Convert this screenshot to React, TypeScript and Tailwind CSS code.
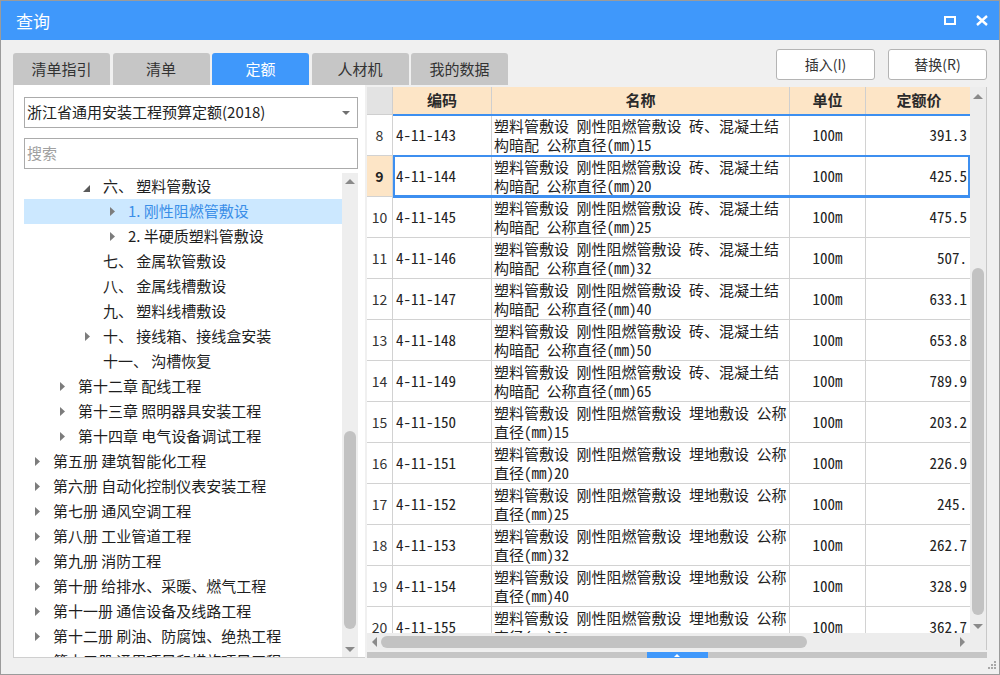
import React from 'react';

type TreeItem = { level: number; text: string; arrow?: boolean; expanded?: boolean; selected?: boolean };

const tree: TreeItem[] = [
  { level: 3, text: '六、 塑料管敷设', expanded: true },
  { level: 4, text: '1. 刚性阻燃管敷设', arrow: true, selected: true },
  { level: 4, text: '2. 半硬质塑料管敷设', arrow: true },
  { level: 3, text: '七、 金属软管敷设' },
  { level: 3, text: '八、 金属线槽敷设' },
  { level: 3, text: '九、 塑料线槽敷设' },
  { level: 3, text: '十、 接线箱、接线盒安装', arrow: true },
  { level: 3, text: '十一、 沟槽恢复' },
  { level: 2, text: '第十二章 配线工程', arrow: true },
  { level: 2, text: '第十三章 照明器具安装工程', arrow: true },
  { level: 2, text: '第十四章 电气设备调试工程', arrow: true },
  { level: 1, text: '第五册 建筑智能化工程', arrow: true },
  { level: 1, text: '第六册 自动化控制仪表安装工程', arrow: true },
  { level: 1, text: '第七册 通风空调工程', arrow: true },
  { level: 1, text: '第八册 工业管道工程', arrow: true },
  { level: 1, text: '第九册 消防工程', arrow: true },
  { level: 1, text: '第十册 给排水、采暖、燃气工程', arrow: true },
  { level: 1, text: '第十一册 通信设备及线路工程', arrow: true },
  { level: 1, text: '第十二册 刷油、防腐蚀、绝热工程', arrow: true },
  { level: 1, text: '第十三册 通用项目和措施项目工程', arrow: true },
];

const concealed = '塑料管敷设 刚性阻燃管敷设 砖、混凝土结';
const buried = '塑料管敷设 刚性阻燃管敷设 埋地敷设 公称';

const rows = [
  { no: 8, code: '4-11-143', l1: concealed, l2: '构暗配 公称直径(mm)15', price: '391.3' },
  { no: 9, code: '4-11-144', l1: concealed, l2: '构暗配 公称直径(mm)20', price: '425.5' },
  { no: 10, code: '4-11-145', l1: concealed, l2: '构暗配 公称直径(mm)25', price: '475.5' },
  { no: 11, code: '4-11-146', l1: concealed, l2: '构暗配 公称直径(mm)32', price: '507.' },
  { no: 12, code: '4-11-147', l1: concealed, l2: '构暗配 公称直径(mm)40', price: '633.1' },
  { no: 13, code: '4-11-148', l1: concealed, l2: '构暗配 公称直径(mm)50', price: '653.8' },
  { no: 14, code: '4-11-149', l1: concealed, l2: '构暗配 公称直径(mm)65', price: '789.9' },
  { no: 15, code: '4-11-150', l1: buried, l2: '直径(mm)15', price: '203.2' },
  { no: 16, code: '4-11-151', l1: buried, l2: '直径(mm)20', price: '226.9' },
  { no: 17, code: '4-11-152', l1: buried, l2: '直径(mm)25', price: '245.' },
  { no: 18, code: '4-11-153', l1: buried, l2: '直径(mm)32', price: '262.7' },
  { no: 19, code: '4-11-154', l1: buried, l2: '直径(mm)40', price: '328.9' },
  { no: 20, code: '4-11-155', l1: buried, l2: '直径(mm)50', price: '362.7' },
];

const tabs = ['清单指引', '清单', '定额', '人材机', '我的数据'];

const TriRight = () => (
  <svg width="5" height="9" viewBox="0 0 5 9">
    <path d="M0 0L5 4.5L0 9Z" fill="#7c7c7c" />
  </svg>
);

const TriExpanded = () => (
  <svg width="7" height="7" viewBox="0 0 7 7">
    <path d="M7 0L7 7L0 7Z" fill="#5a5a5a" />
  </svg>
);

const Caret = ({ dir }: { dir: 'up' | 'down' | 'left' | 'right' }) => {
  const d = {
    up: 'M0 5L5 0L10 5Z',
    down: 'M0 0L10 0L5 5Z',
    left: 'M5 0L5 10L0 5Z',
    right: 'M0 0L5 5L0 10Z',
  }[dir];
  const vertical = dir === 'up' || dir === 'down';
  return (
    <svg width={vertical ? 10 : 5} height={vertical ? 5 : 10} viewBox={vertical ? '0 0 10 5' : '0 0 5 10'}>
      <path d={d} fill="#8a8a8a" />
    </svg>
  );
};

const mono = "font-['Noto_Sans_Mono_CJK_SC','Liberation_Mono','Noto_Sans_CJK_SC',monospace]";

export default function App() {
  return (
    <div className="w-[1000px] h-[675px] flex flex-col border border-[#9b9b9b] bg-[#f0f0f0] font-['Noto_Sans_CJK_SC','Noto_Sans',sans-serif] text-[#222] overflow-hidden">
      {/* title bar */}
      <div className="h-[39px] shrink-0 bg-[#3f98fb] flex items-center justify-between pl-[15px] pr-[11px]">
        <span className="text-white text-[17px]">查询</span>
        <div className="flex items-center gap-[20px]">
          <div className="w-[12px] h-[9px] border-2 border-white" />
          <svg width="12" height="11" viewBox="0 0 12 11">
            <path d="M1 1L11 10M11 1L1 10" stroke="white" strokeWidth="2.4" />
          </svg>
        </div>
      </div>

      <div className="flex-1 flex flex-col px-[12px] min-h-0">
        {/* tabs + buttons */}
        <div className="flex items-end justify-between mt-[9px] h-[36px] shrink-0">
          <div className="flex gap-[2.5px]">
            {tabs.map((t) => (
              <div
                key={t}
                className={
                  'w-[97px] h-[32px] rounded-t-[3px] flex items-center justify-center text-[15px] ' +
                  (t === '定额' ? 'bg-[#3f98fb] text-white' : 'bg-[#c6c6c6] text-[#333]')
                }
              >
                {t}
              </div>
            ))}
          </div>
          <div className="flex gap-[13px] self-start">
            {['插入(I)', '替换(R)'].map((b) => (
              <div
                key={b}
                className="w-[99px] h-[31px] bg-white border border-[#b4b4b4] rounded-[3px] flex items-center justify-center text-[14px] text-[#333]"
              >
                {b}
              </div>
            ))}
          </div>
        </div>

        {/* main */}
        <div className="h-[573px] flex gap-[2px] shrink-0">
          {/* left tree panel */}
          <div className="w-[352px] bg-white border-l border-b border-[#cfcfcf] flex flex-col pl-[10px] pr-[7px] pt-[12px]">
            <div className="h-[31px] border border-[#ababab] flex items-center justify-between pl-[2px] pr-[7px]">
              <span className="text-[15px] text-[#222]">浙江省通用安装工程预算定额(2018)</span>
              <svg width="8" height="4" viewBox="0 0 8 4">
                <path d="M0 0L8 0L4 4Z" fill="#707070" />
              </svg>
            </div>
            <div className="h-[31px] mt-[10px] border border-[#ababab] flex items-center pl-[2px]">
              <span className="text-[15px] text-[#a0a0a0]">搜索</span>
            </div>
            <div className="flex-1 flex mt-[4px] min-h-0">
              <div className="flex-1 overflow-hidden pt-[1px]">
                {tree.map((it, i) => (
                  <div
                    key={i}
                    className={'h-[25px] flex items-center ' + (it.selected ? 'bg-[#cce8ff]' : '')}
                  >
                    <div className="shrink-0" style={{ width: (it.level - 1) * 25 }} />
                    <div className="w-[29px] shrink-0 flex items-center pl-[9px]">
                      {it.expanded ? (
                        <div className="pt-[3px]">
                          <TriExpanded />
                        </div>
                      ) : it.arrow ? (
                        <div className="pl-[2px]">
                          <TriRight />
                        </div>
                      ) : null}
                    </div>
                    <span
                      className={
                        'text-[15px] whitespace-pre ' + (it.selected ? 'text-[#3a8ee8]' : 'text-[#1e1e1e]')
                      }
                    >
                      {it.text}
                    </span>
                  </div>
                ))}
              </div>
              {/* tree scrollbar */}
              <div className="w-[16px] shrink-0 bg-[#eeeeee] flex flex-col items-center">
                <div className="h-[14px] flex items-center justify-center pt-[2px]">
                  <Caret dir="up" />
                </div>
                <div className="flex-1 w-full flex flex-col items-center pt-[244px] pb-[14px]">
                  <div className="w-[12px] flex-1 rounded-full bg-[#c2c2c2]" />
                </div>
                <div className="h-[14px] flex items-center justify-center pb-[2px]">
                  <Caret dir="down" />
                </div>
              </div>
            </div>
          </div>

          {/* right table panel */}
          <div className="flex-1 flex flex-col pt-[2px]">
            <div className="flex flex-1 min-h-0">
              {/* grid */}
              <div className="w-[603px] bg-white overflow-hidden">
                {/* header */}
                <div className="h-[28px] flex border-b border-[#cfcfcf] text-[15px] font-bold text-[#2a2a2a]">
                  <div className="w-[26px] shrink-0 bg-[#e3e3e3] border-r border-[#cfcfcf]" />
                  <div className="w-[99px] shrink-0 bg-[#fde5c6] border-r border-[#cfcfcf] flex items-center justify-center">编码</div>
                  <div className="w-[298px] shrink-0 bg-[#fde5c6] border-r border-[#cfcfcf] flex items-center justify-center">名称</div>
                  <div className="w-[76px] shrink-0 bg-[#fde5c6] border-r border-[#cfcfcf] flex items-center justify-center">单位</div>
                  <div className="w-[110px] shrink-0 bg-[#fde5c6] flex items-center justify-center pr-[4px]">定额价</div>
                </div>
                {rows.map((r) => {
                  const sel = r.no === 9;
                  const blueTop = r.no === 8 || r.no === 10;
                  return (
                    <div key={r.no} className="relative h-[41px] flex border-b border-[#d2d2d2]">
                      <div
                        className={
                          'w-[26px] shrink-0 border-r border-[#d2d2d2] flex items-center justify-center text-[14px] ' +
                          (sel ? 'bg-[#fde5c6] font-bold text-[#222]' : 'text-[#333]')
                        }
                      >
                        {r.no}
                      </div>
                      <div className={'w-[99px] shrink-0 border-r border-[#d2d2d2] flex items-center pl-[3px] text-[15px] ' + mono}>
                        {r.code}
                      </div>
                      <div className={'w-[298px] shrink-0 border-r border-[#d2d2d2] flex flex-col justify-center pl-[2px] text-[15px] leading-[19px] whitespace-pre ' + mono}>
                        <div>{r.l1}</div>
                        <div>{r.l2}</div>
                      </div>
                      <div className={'w-[76px] shrink-0 border-r border-[#d2d2d2] flex items-center justify-center text-[15px] ' + mono}>
                        100m
                      </div>
                      <div className={'w-[104px] shrink-0 flex items-center justify-end pr-[3px] text-[15px] ' + mono}>
                        {r.price}
                      </div>
                      {blueTop && (
                        <div className="absolute left-[26px] right-0 top-[-1px] h-[2px] bg-[#3d8ff0]" />
                      )}
                      {sel && (
                        <div className="absolute left-[26px] right-0 top-[-1px] bottom-[-1px] border-2 border-[#3d8ff0]" />
                      )}
                    </div>
                  );
                })}
              </div>
              {/* vertical scrollbar */}
              <div className="w-[17px] shrink-0 bg-[#ededed] border-r border-[#c8c8c8] flex flex-col items-center">
                <div className="h-[16px] flex items-center justify-center pt-[2px]">
                  <Caret dir="up" />
                </div>
                <div className="flex-1 w-full flex flex-col items-center pt-[165px] pb-[4px]">
                  <div className="w-[12px] flex-1 rounded-full bg-[#c2c2c2]" />
                </div>
                <div className="h-[14px] flex items-center justify-center">
                  <Caret dir="down" />
                </div>
              </div>
            </div>
            {/* horizontal scrollbar */}
            <div className="h-[17px] shrink-0 flex">
              <div className="w-[603px] bg-[#ededed] flex items-center px-[5px] gap-[4px]">
                <Caret dir="left" />
                <div className="w-[426px] h-[12px] rounded-full bg-[#c2c2c2]" />
                <div className="flex-1" />
                <Caret dir="right" />
              </div>
              <div className="flex-1 bg-[#ededed] border-r border-[#c8c8c8]" />
            </div>
            {/* splitter bar */}
            <div className="h-[6px] mt-[2px] shrink-0 bg-[#c6c6c6] flex justify-center">
              <div className="w-[61px] h-full bg-[#3f98fb] flex items-center justify-center">
                <svg width="6" height="3" viewBox="0 0 6 3">
                  <path d="M0 3L3 0L6 3Z" fill="white" />
                </svg>
              </div>
            </div>
          </div>
        </div>

        {/* status strip with resize grip */}
        <div className="flex-1 flex justify-end items-end pb-[3px]">
          <svg width="10" height="10" viewBox="0 0 10 10" className="mr-[-9px]">
            {[
              [8, 0],
              [8, 3],
              [5, 3],
              [8, 6],
              [5, 6],
              [2, 6],
            ].map(([x, y], i) => (
              <rect key={i} x={x} y={y} width="2" height="2" fill="#a8a8a8" />
            ))}
          </svg>
        </div>
      </div>
    </div>
  );
}
